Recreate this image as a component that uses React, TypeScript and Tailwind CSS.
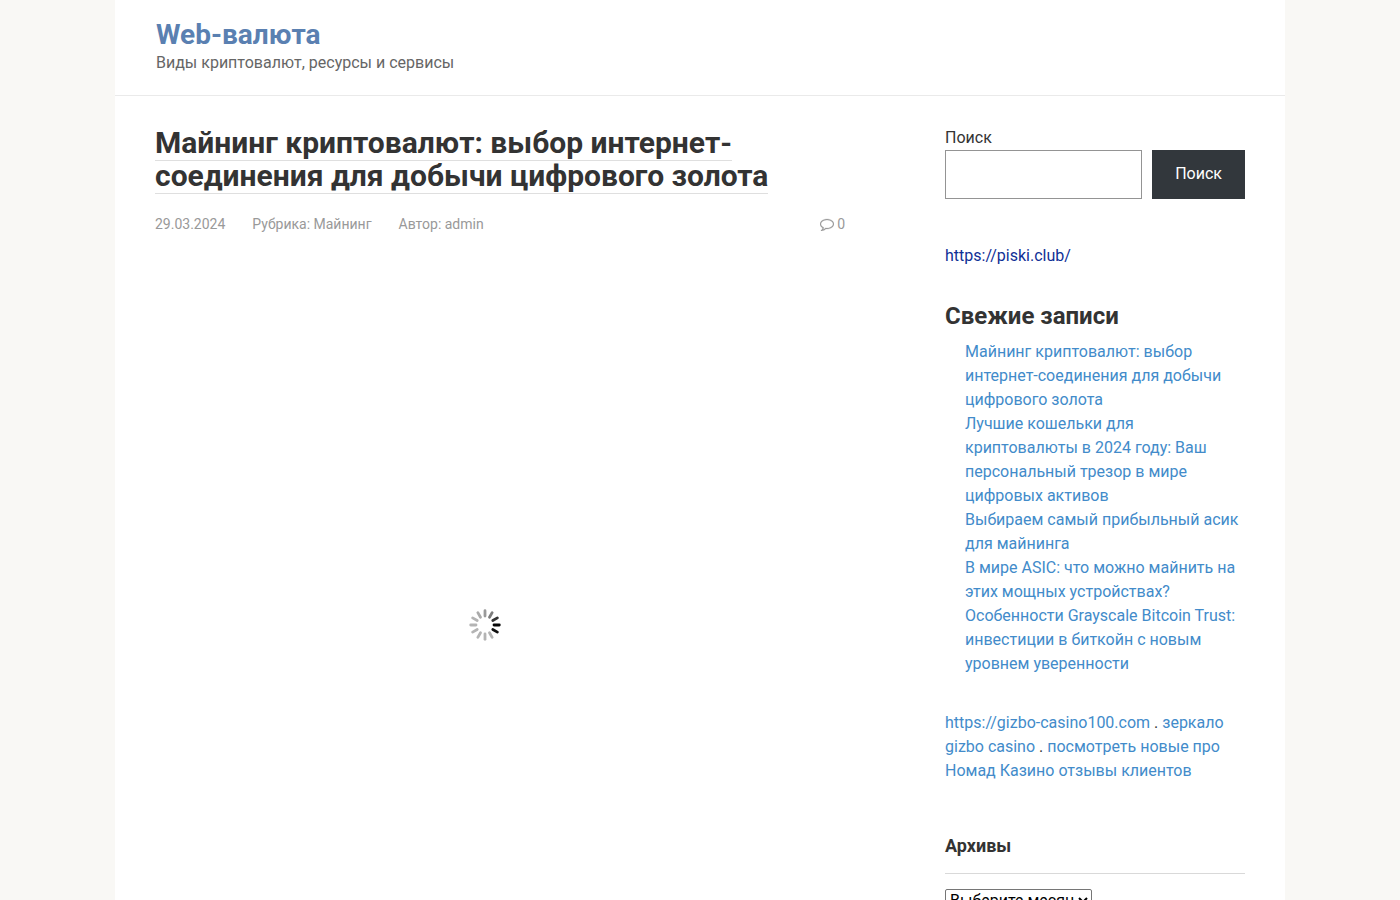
import { useState, FormEvent } from 'react'

type Post = { slug: string; title: string }

const posts: Post[] = [
  { slug: 'mining-internet', title: 'Майнинг криптовалют: выбор интернет-соединения для добычи цифрового золота' },
  { slug: 'koshelki-2024', title: 'Лучшие кошельки для криптовалюты в 2024 году: Ваш персональный трезор в мире цифровых активов' },
  { slug: 'pribylnyj-asic', title: 'Выбираем самый прибыльный асик для майнинга' },
  { slug: 'mir-asic', title: 'В мире ASIC: что можно майнить на этих мощных устройствах?' },
  { slug: 'grayscale', title: 'Особенности Grayscale Bitcoin Trust: инвестиции в биткойн с новым уровнем уверенности' },
]

// spoke colours, clockwise from 12 o'clock
const spokes = [
  '#9a9a9a', '#7c7c7c', '#333333', '#050505', '#111111', '#b4b4b4',
  '#b4b4b4', '#b4b4b4', '#b4b4b4', '#b4b4b4', '#b4b4b4', '#aaaaaa',
]

function Spinner() {
  return (
    <svg className="size-8" viewBox="0 0 32 32" role="img" aria-label="Загрузка">
      {spokes.map((color, i) => (
        <line
          key={i}
          x1="16"
          y1="1.7"
          x2="16"
          y2="7"
          stroke={color}
          strokeWidth="2.8"
          strokeLinecap="round"
          transform={`rotate(${i * 30} 16 16)`}
        />
      ))}
    </svg>
  )
}

function CommentIcon() {
  return (
    <svg className="size-3.5" viewBox="0 0 1792 1792" fill="currentColor" stroke="currentColor" strokeWidth="30" aria-hidden="true">
      <path d="M896 384q-204 0-381.5 69.5t-282 187.5-104.5 255q0 112 71.5 213.5t201.5 175.5l87 50-27 96q-24 91-70 172 152-63 275-171l43-38 57 6q69 8 130 8 204 0 381.5-69.5t282-187.5 104.5-255-104.5-255-282-187.5-381.5-69.500zM1792 896q0 174-120 321.5t-326 233-450 85.5q-70 0-145-8-198 175-460 242-49 14-114 22h-5q-15 0-27-10.5t-16-27.5v-1q-3-4-.5-12t2-10 4.5-9.500l6-9t7-8.500 8-9q7-8 31-34.500t34.500-38 31-39.500 32.500-51 27-59 26-76q-157-89-247.500-220t-90.500-281q0-174 120-321.500t326-233 450-85.500 450 85.500 326 233 120 321.500z" />
    </svg>
  )
}

function SearchForm() {
  const [query, setQuery] = useState('')

  const handleSubmit = (e: FormEvent<HTMLFormElement>) => {
    e.preventDefault()
  }

  return (
    <form onSubmit={handleSubmit}>
      <label htmlFor="search" className="block">Поиск</label>
      <div className="flex gap-[10px]">
        <input
          id="search"
          name="s"
          type="search"
          value={query}
          onChange={e => setQuery(e.target.value)}
          className="h-[49px] min-w-0 flex-1 border border-[#949494] px-2"
        />
        <button type="submit" className="h-[49px] bg-[#32373c] px-[23px] pb-0.5 text-white">
          Поиск
        </button>
      </div>
    </form>
  )
}

export default function App() {
  return (
    <div className="min-h-screen bg-[#f9f8f5] font-['Roboto',sans-serif] text-base text-[#333]">
      <div className="mx-auto max-w-[1170px] bg-white">
        <header className="border-b border-[#eaeaea] px-[41px] pt-[19px] pb-5">
          <a href="/" className="block text-[28px] leading-8 font-bold text-[#5a80b1]">Web-валюта</a>
          <p className="leading-6 text-[#666]">Виды криптовалют, ресурсы и сервисы</p>
        </header>

        <div className="flex flex-col gap-10 px-10 pt-[30px] lg:flex-row lg:gap-[100px]">
          <main className="min-w-0 flex-1">
            <h1 className="text-[30px] leading-[33px] font-bold">
              <a href="/mining-internet" className="border-b border-[#dfdfdf]">
                Майнинг криптовалют: выбор интернет-соединения для добычи цифрового золота
              </a>
            </h1>
            <div className="mt-[22px] flex gap-[27px] text-sm leading-5 text-[#999]">
              <span>29.03.2024</span>
              <span>Рубрика: <a href="/category/mining">Майнинг</a></span>
              <span>Автор: admin</span>
              <span className="ml-auto flex items-center gap-[3px]">
                <CommentIcon />0
              </span>
            </div>
            <div className="mt-8 flex h-[717px] max-w-[660px] items-center justify-center">
              <Spinner />
            </div>
          </main>

          <aside className="w-full shrink-0 leading-6 lg:w-[300px]">
            <SearchForm />

            <p className="mt-[45px]">
              <a href="https://piski.club/" className="text-[#0f2f96]">https://piski.club/</a>
            </p>

            <section className="mt-[35px]">
              <h2 className="text-2xl leading-[26px] font-bold">Свежие записи</h2>
              <ul className="mt-[11px] pl-5">
                {posts.map(p => (
                  <li key={p.slug}>
                    <a href={`/${p.slug}`} className="text-[#428bca]">{p.title}</a>
                  </li>
                ))}
              </ul>
            </section>

            <p className="mt-[35px]">
              <a href="https://gizbo-casino100.com" className="text-[#428bca]">https://gizbo-casino100.com</a> .{' '}
              <a href="/gizbo" className="text-[#428bca]">зеркало gizbo casino</a> .{' '}
              <a href="/nomad" className="text-[#428bca]">посмотреть новые про Номад Казино отзывы клиентов</a>
            </p>

            <section className="mt-[50px]">
              <h2 className="border-b border-[#d9d9d9] pb-[14px] text-lg leading-[26px] font-bold">
                <label htmlFor="archives">Архивы</label>
              </h2>
              <select
                id="archives"
                className="mt-[15px] h-[23px] w-[147px] appearance-auto rounded-[2px] border border-[#767676] bg-white text-base leading-5 text-black"
              >
                <option>Выберите месяц</option>
                <option>Март 2024</option>
              </select>
            </section>
          </aside>
        </div>
      </div>
    </div>
  )
}
